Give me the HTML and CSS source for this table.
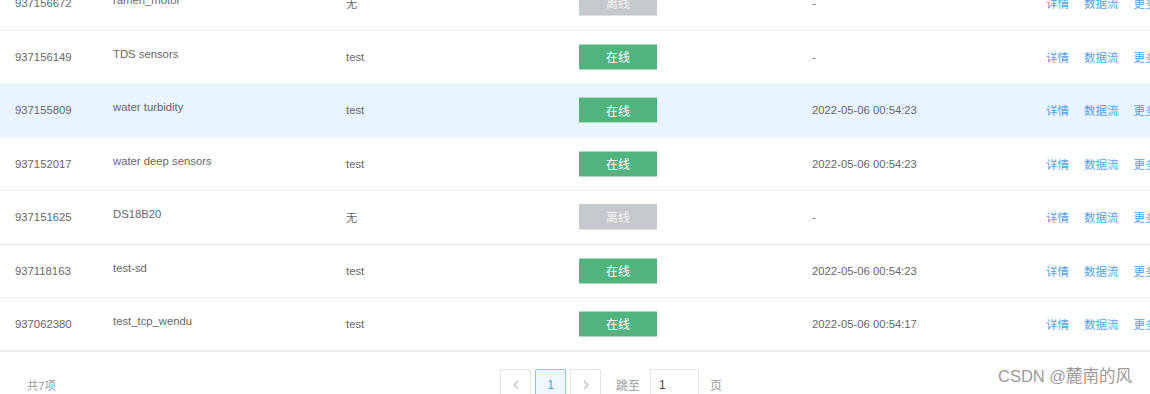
FILE: index.html
```html
<!DOCTYPE html>
<html lang="zh">
<head>
<meta charset="utf-8">
<title>设备列表</title>
<link rel="stylesheet" href="styles.css">
</head>
<body>
<div class="page">
  <div class="rows">
    <div class="row">
      <div class="cell id">937156672</div>
      <div class="cell name">ramen_motor</div>
      <div class="cell">无</div>
      <div class="cell"><span class="badge off">离线</span></div>
      <div class="cell">-</div>
      <div class="cell actions"><a>详情</a><a>数据流</a><a>更多</a></div>
    </div>
    <div class="row">
      <div class="cell id">937156149</div>
      <div class="cell name">TDS sensors</div>
      <div class="cell">test</div>
      <div class="cell"><span class="badge on">在线</span></div>
      <div class="cell">-</div>
      <div class="cell actions"><a>详情</a><a>数据流</a><a>更多</a></div>
    </div>
    <div class="row hover">
      <div class="cell id">937155809</div>
      <div class="cell name">water turbidity</div>
      <div class="cell">test</div>
      <div class="cell"><span class="badge on">在线</span></div>
      <div class="cell">2022-05-06 00:54:23</div>
      <div class="cell actions"><a>详情</a><a>数据流</a><a>更多</a></div>
    </div>
    <div class="row">
      <div class="cell id">937152017</div>
      <div class="cell name">water deep sensors</div>
      <div class="cell">test</div>
      <div class="cell"><span class="badge on">在线</span></div>
      <div class="cell">2022-05-06 00:54:23</div>
      <div class="cell actions"><a>详情</a><a>数据流</a><a>更多</a></div>
    </div>
    <div class="row">
      <div class="cell id">937151625</div>
      <div class="cell name">DS18B20</div>
      <div class="cell">无</div>
      <div class="cell"><span class="badge off">离线</span></div>
      <div class="cell">-</div>
      <div class="cell actions"><a>详情</a><a>数据流</a><a>更多</a></div>
    </div>
    <div class="row">
      <div class="cell id">937118163</div>
      <div class="cell name">test-sd</div>
      <div class="cell">test</div>
      <div class="cell"><span class="badge on">在线</span></div>
      <div class="cell">2022-05-06 00:54:23</div>
      <div class="cell actions"><a>详情</a><a>数据流</a><a>更多</a></div>
    </div>
    <div class="row last">
      <div class="cell id">937062380</div>
      <div class="cell name">test_tcp_wendu</div>
      <div class="cell">test</div>
      <div class="cell"><span class="badge on">在线</span></div>
      <div class="cell">2022-05-06 00:54:17</div>
      <div class="cell actions"><a>详情</a><a>数据流</a><a>更多</a></div>
    </div>
  </div>
  <div class="footer">
    <div class="total">共7项</div>
    <div class="pager">
      <span class="pbtn"><svg width="8" height="10" viewBox="0 0 8 10"><path d="M6 1 L2 5 L6 9" fill="none" stroke="#bbb" stroke-width="1.1"/></svg></span>
      <span class="pbtn active">1</span>
      <span class="pbtn"><svg width="8" height="10" viewBox="0 0 8 10"><path d="M2 1 L6 5 L2 9" fill="none" stroke="#bbb" stroke-width="1.1"/></svg></span>
      <span class="jump">跳至</span>
      <span class="pinput">1</span>
      <span class="unit">页</span>
    </div>
  </div>
  <div class="watermark">CSDN @麓南的风</div>
</div>
</body>
</html>
```
FILE: styles.css
```css
html, body {
  margin: 0;
  padding: 0;
  background: #fff;
}
body {
  font-family: "Liberation Sans", Arial, "Noto Sans CJK SC", sans-serif;
  font-size: 11.3px;
  color: #666;
}
.page {
  position: relative;
  width: 1150px;
  height: 394px;
  overflow: hidden;
}
.rows {
  width: 1200px;
  margin-top: -23px;
}
.row {
  display: grid;
  grid-template-columns: 98px 233px 233px 233px 233px 1fr;
  height: 53.5px;
  box-sizing: border-box;
  border-bottom: 1px solid #efefef;
  align-items: center;
}
.row.hover {
  background: #e9f5fe;
}
.row.last {
  border-bottom: 2px solid #ebebeb;
}
.cell {
  padding-left: 15px;
  white-space: nowrap;
}
.cell.name {
  padding-bottom: 6px;
}
.badge {
  display: inline-flex;
  align-items: center;
  justify-content: center;
  width: 78px;
  height: 26px;
  box-sizing: border-box;
  font-size: 12px;
  color: #fff;
}
.badge.on {
  background: #51b47e;
  border-top: 1px solid #a9dcc0;
  border-bottom: 1px solid #a9dcc0;
}
.badge.off {
  background: #c5c9cd;
  color: #f2f2f2;
  border-bottom: 1px solid #dde0e3;
}
.actions {
  display: flex;
  gap: 15px;
  padding-left: 16px;
}
.actions a {
  color: #4fa0f2;
  font-size: 11.5px;
}
.footer {
  display: flex;
  align-items: center;
  padding: 17px 0 0 27px;
}
.total {
  width: 473px;
  color: #999;
}
.pager {
  display: flex;
  align-items: center;
}
.pbtn {
  display: inline-flex;
  align-items: center;
  justify-content: center;
  width: 31px;
  height: 32px;
  box-sizing: border-box;
  border: 1px solid #e2e2e2;
  border-radius: 2px;
  margin-right: 4px;
  color: #4a9cf0;
  font-size: 12px;
}
.pbtn.active {
  border-color: #8fc2f5;
  background: #eef6ff;
}
.jump {
  margin-left: 11px;
  color: #999;
  font-size: 12px;
}
.pinput {
  display: inline-flex;
  align-items: center;
  width: 49px;
  height: 32px;
  box-sizing: border-box;
  border: 1px solid #e2e2e2;
  border-radius: 2px;
  margin-left: 10px;
  padding-left: 8px;
  color: #444;
  font-size: 12px;
}
.unit {
  margin-left: 11px;
  color: #999;
  font-size: 12px;
}
.watermark {
  position: absolute;
  left: 998px;
  top: 366px;
  font-size: 16.5px;
  line-height: 20px;
  color: #9a9a9a;
  white-space: nowrap;
}
```
